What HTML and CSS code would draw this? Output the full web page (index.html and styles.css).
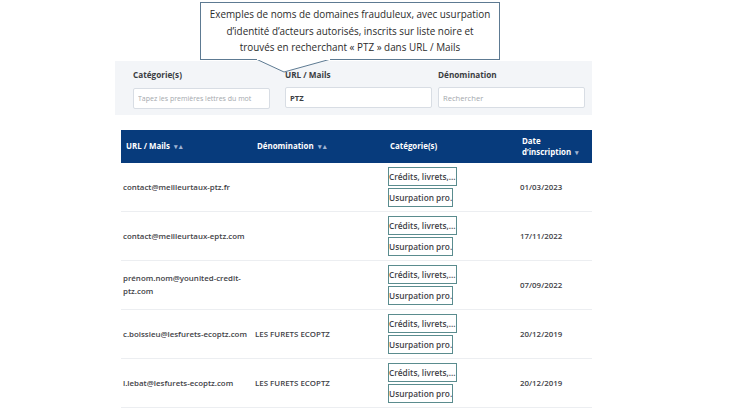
FILE: index.html
```html
<!DOCTYPE html>
<html lang="fr">
<head>
  <meta charset="UTF-8">
  <title>Liste noire - recherche PTZ</title>
  <link rel="stylesheet" href="styles.css">
</head>
<body>
<div class="page">

  <!-- Bulle d'explication au-dessus du filtre -->
  <div class="callout">
    <p>Exemples de noms de domaines frauduleux, avec usurpation<br>d’identité d’acteurs autorisés, inscrits sur liste noire et<br>trouvés en recherchant « PTZ » dans URL / Mails</p>
    <svg class="callout-tail" width="80" height="16" viewBox="0 0 80 16">
      <polygon points="0,0 28,13 75,0" fill="#fff" stroke="#5d7a92" stroke-width="1"/>
      <line x1="1" y1="0" x2="74" y2="0" stroke="#fff" stroke-width="2"/>
    </svg>
  </div>

  <!-- Filtres -->
  <div class="filters">
    <div class="field">
      <label>Catégorie(s)</label>
      <input class="small" type="text" placeholder="Tapez les premières lettres du mot">
    </div>
    <div class="field">
      <label>URL / Mails</label>
      <input type="text" value="PTZ">
    </div>
    <div class="field">
      <label>Dénomination</label>
      <input type="text" placeholder="Rechercher">
    </div>
  </div>

  <!-- Tableau des résultats -->
  <table class="results">
    <thead>
      <tr>
        <th>URL / Mails <span class="sort">▾▴</span></th>
        <th>Dénomination <span class="sort">▾▴</span></th>
        <th>Catégorie(s)</th>
        <th>Date<br>d’inscription <span class="sort">▾</span></th>
      </tr>
    </thead>
    <tbody>
      <tr>
        <td>contact@meilleurtaux-ptz.fr</td>
        <td></td>
        <td><span class="tag">Crédits, livrets,…</span><span class="tag">Usurpation pro.</span></td>
        <td>01/03/2023</td>
      </tr>
      <tr>
        <td>contact@meilleurtaux-eptz.com</td>
        <td></td>
        <td><span class="tag">Crédits, livrets,…</span><span class="tag">Usurpation pro.</span></td>
        <td>17/11/2022</td>
      </tr>
      <tr>
        <td>prénom.nom@younited-credit-<br>ptz.com</td>
        <td></td>
        <td><span class="tag">Crédits, livrets,…</span><span class="tag">Usurpation pro.</span></td>
        <td>07/09/2022</td>
      </tr>
      <tr>
        <td>c.boissieu@lesfurets-ecoptz.com</td>
        <td>LES FURETS ECOPTZ</td>
        <td><span class="tag">Crédits, livrets,…</span><span class="tag">Usurpation pro.</span></td>
        <td>20/12/2019</td>
      </tr>
      <tr>
        <td>l.lebat@lesfurets-ecoptz.com</td>
        <td>LES FURETS ECOPTZ</td>
        <td><span class="tag">Crédits, livrets,…</span><span class="tag">Usurpation pro.</span></td>
        <td>20/12/2019</td>
      </tr>
    </tbody>
  </table>

</div>
</body>
</html>
```

FILE: styles.css
```css
/* Base de la page */
body {
  margin: 0;
  background: #fff;
  font-family: "Open Sans", "Liberation Sans", sans-serif;
  color: #3f4247;
}

.page {
  display: flex;
  flex-direction: column;
  padding-top: 2px;
}

/* Bulle */
.callout {
  position: relative;
  z-index: 2;
  margin-left: 200px;
  width: 298px;
  height: 56px;
  border: 1px solid #5d7a92;
  background: #fff;
  display: flex;
  align-items: center;
  justify-content: center;
}

.callout p {
  margin: 0;
  text-align: center;
  font-size: 9.9px;
  line-height: 16.5px;
  color: #2b2b2b;
  white-space: nowrap;
}

.callout-tail {
  position: absolute;
  left: 55px;
  top: 56px;
}

/* Zone de filtres */
.filters {
  margin: 1px 0 0 115px;
  width: 459px;
  height: 54px;
  padding: 0 0 0 18px;
  background: #f3f5f8;
  display: grid;
  grid-template-columns: 152px 153px 147px;
  align-content: center;
}

.field label {
  display: block;
  font-size: 8.2px;
  font-weight: 700;
  color: #3a3d42;
  margin: 1px 0 4px 0;
}

.field input {
  box-sizing: border-box;
  width: 147px;
  height: 21px;
  border: 1px solid #d8dde4;
  border-radius: 2px;
  background: #fff;
  padding: 0 4px;
  font-family: inherit;
  font-size: 7.6px;
  font-weight: 700;
  color: #3a3d42;
}

.field input.small {
  width: 137px;
  font-size: 7px;
}

.field input::placeholder {
  color: #a4a8ad;
  font-weight: 400;
}

/* Tableau */
.results {
  margin: 15px 0 0 121px;
  width: 471px;
  border-collapse: collapse;
  font-size: 7.9px;
  font-weight: 600;
}

.results th {
  background: #073b7c;
  color: #fff;
  text-align: left;
  font-weight: 700;
  height: 33px;
  padding: 0 0 0 5px;
  line-height: 11px;
}

.results th:nth-child(1) { width: 126px; }
.results th:nth-child(2) { width: 128px; }
.results th:nth-child(3) { width: 127px; }

.sort {
  color: #9fb3d3;
  font-size: 7px;
  letter-spacing: 1px;
  margin-left: 2px;
}

.results td {
  height: 48px;
  padding: 0 0 0 2px;
  border-bottom: 1px solid #eceef1;
  vertical-align: middle;
  line-height: 13px;
}

.results td:nth-child(2) {
  padding-left: 3px;
}

.results td:nth-child(3) {
  padding-left: 3px;
}

.results td:nth-child(4) {
  padding-left: 3px;
}

.tag {
  display: table;
  box-sizing: border-box;
  height: 19px;
  line-height: 17px;
  padding: 0 5px;
  border: 1px solid #5a8c8e;
  margin: 2px 0;
  font-size: 8.3px;
  white-space: nowrap;
}
```
